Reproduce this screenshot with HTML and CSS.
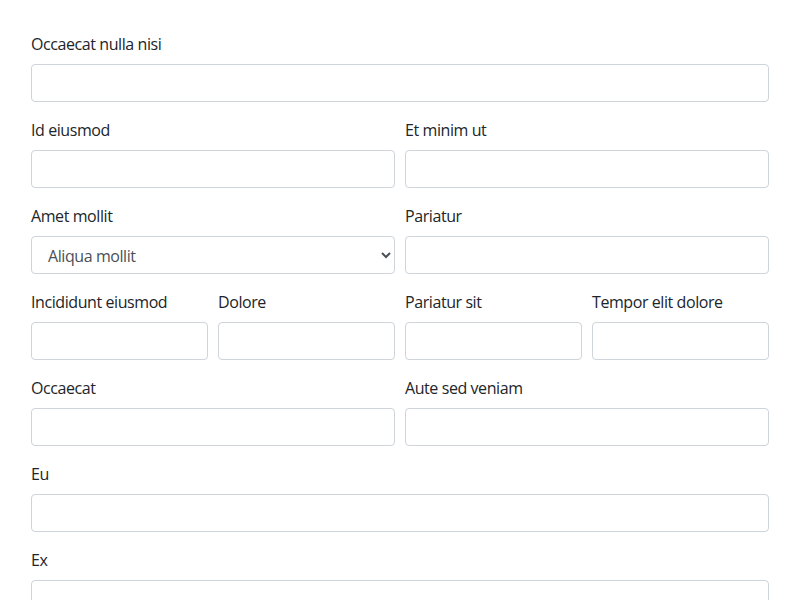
FILE: index.html
```html
<!DOCTYPE html>
<html>
<head>
<meta charset="utf-8">
<link rel="stylesheet" href="styles.css">
</head>
<body>
<form class="form">
  <div class="row">
    <div class="field">
      <label class="label">Occaecat nulla nisi</label>
      <input class="control" type="text">
    </div>
  </div>
  <div class="row cols-2">
    <div class="field">
      <label class="label">Id eiusmod</label>
      <input class="control" type="text">
    </div>
    <div class="field">
      <label class="label">Et minim ut</label>
      <input class="control" type="text">
    </div>
  </div>
  <div class="row cols-2">
    <div class="field">
      <label class="label">Amet mollit</label>
      <select class="control select"><option>Aliqua mollit</option></select>
    </div>
    <div class="field">
      <label class="label">Pariatur</label>
      <input class="control" type="text">
    </div>
  </div>
  <div class="row cols-4">
    <div class="field">
      <label class="label">Incididunt eiusmod</label>
      <input class="control" type="text">
    </div>
    <div class="field">
      <label class="label">Dolore</label>
      <input class="control" type="text">
    </div>
    <div class="field">
      <label class="label">Pariatur sit</label>
      <input class="control" type="text">
    </div>
    <div class="field">
      <label class="label">Tempor elit dolore</label>
      <input class="control" type="text">
    </div>
  </div>
  <div class="row cols-2">
    <div class="field">
      <label class="label">Occaecat</label>
      <input class="control" type="text">
    </div>
    <div class="field">
      <label class="label">Aute sed veniam</label>
      <input class="control" type="text">
    </div>
  </div>
  <div class="row">
    <div class="field">
      <label class="label">Eu</label>
      <input class="control" type="text">
    </div>
  </div>
  <div class="row">
    <div class="field">
      <label class="label">Ex</label>
      <input class="control" type="text">
    </div>
  </div>
</form>
</body>
</html>
```

FILE: styles.css
```css
html, body {
  margin: 0;
  padding: 0;
  background: #ffffff;
}
body {
  font-family: "Open Sans", "Noto Sans", sans-serif;
  font-size: 16px;
  line-height: 1.5;
  color: #212529;
  letter-spacing: -0.42px;
}
.form {
  padding: 32px 31px 0 31px;
  display: flex;
  flex-direction: column;
  gap: 16px;
}
.row {
  display: grid;
  grid-template-columns: 1fr;
  gap: 10px;
}
.cols-2 { grid-template-columns: 1fr 1fr; }
.cols-4 { grid-template-columns: 1fr 1fr 1fr 1fr; }
.field {
  display: flex;
  flex-direction: column;
  min-width: 0;
}
.label {
  display: block;
  height: 24px;
  margin-bottom: 8px;
}
.control {
  box-sizing: border-box;
  width: 100%;
  height: 38px;
  border: 1px solid #ced4da;
  border-radius: 4px;
  background: #fff;
  font: inherit;
  letter-spacing: inherit;
  color: #495057;
  padding: 6px 12px;
  margin: 0;
}
.select {
  padding: 7px 4px 5px 12px;
}
```
